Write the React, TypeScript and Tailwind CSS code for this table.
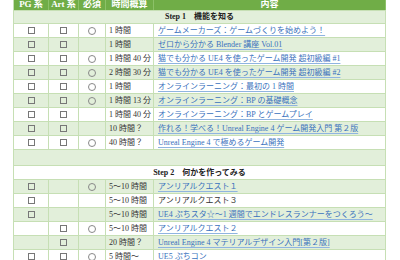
import React from "react";

type Row = {
  pg: boolean;
  art: boolean;
  req: boolean;
  time: string;
  text: string;
  link: boolean;
  green: boolean;
};

const step1: Row[] = [
  { pg: true, art: true, req: true, time: "1 時間", text: "ゲームメーカーズ：ゲームづくりを始めよう！", link: true, green: false },
  { pg: true, art: true, req: false, time: "1 時間", text: "ゼロから分かる Blender 講座 Vol.01", link: true, green: true },
  { pg: true, art: true, req: true, time: "1 時間 40 分", text: "猫でも分かる UE4 を使ったゲーム開発 超初級編 #1", link: true, green: false },
  { pg: true, art: true, req: true, time: "2 時間 30 分", text: "猫でも分かる UE4 を使ったゲーム開発 超初級編 #2", link: true, green: true },
  { pg: true, art: true, req: true, time: "1 時間", text: "オンラインラーニング：最初の 1 時間", link: true, green: false },
  { pg: true, art: true, req: true, time: "1 時間 13 分", text: "オンラインラーニング：BP の基礎概念", link: true, green: true },
  { pg: true, art: true, req: false, time: "1 時間 40 分", text: "オンラインラーニング：BP とゲームプレイ", link: true, green: false },
  { pg: true, art: true, req: false, time: "10 時間？", text: "作れる！学べる！Unreal Engine 4 ゲーム開発入門 第２版", link: true, green: true },
  { pg: true, art: true, req: true, time: "40 時間？", text: "Unreal Engine 4 で極めるゲーム開発", link: true, green: false },
];

const step2: Row[] = [
  { pg: true, art: false, req: true, time: "5～10 時間", text: "アンリアルクエスト１", link: true, green: true },
  { pg: true, art: false, req: false, time: "5～10 時間", text: "アンリアルクエスト３", link: false, green: false },
  { pg: true, art: false, req: false, time: "5～10 時間", text: "UE4 ぷちスタ☆～1 週間でエンドレスランナーをつくろう～", link: true, green: true },
  { pg: false, art: true, req: true, time: "5～10 時間", text: "アンリアルクエスト２", link: true, green: false },
  { pg: false, art: true, req: false, time: "20 時間？", text: "Unreal Engine 4 マテリアルデザイン入門[第２版]", link: true, green: true },
  { pg: true, art: true, req: true, time: "5 時間～", text: "UE5 ぷちコン", link: true, green: false },
];

const Box = () => <span className="block w-[7px] h-[7px] border border-[#777]" />;
const Circle = () => <span className="block w-[8px] h-[8px] rounded-full border border-[#888]" />;

function DataRow({ r }: { r: Row }) {
  return (
    <div
      className={`flex h-[14px] border-b border-[#c6dfb4] ${r.green ? "bg-[#e2efda]" : "bg-white"}`}
    >
      <div className="w-[35px] flex items-center justify-center border-r border-[#c6dfb4]">{r.pg && <Box />}</div>
      <div className="w-[30px] flex items-center justify-center border-r border-[#c6dfb4]">{r.art && <Box />}</div>
      <div className="w-[27px] flex items-center justify-center border-r border-[#c6dfb4]">{r.req && <Circle />}</div>
      <div className="w-[48px] flex items-center pl-[3px] border-r border-[#c6dfb4] text-[#333] whitespace-nowrap">{r.time}</div>
      <div className="flex-1 flex items-center pl-[4px] border-r border-[#c6dfb4] whitespace-nowrap overflow-hidden">
        {r.link ? (
          <span className="text-[#3a72bd] underline decoration-[#8fb4e0] underline-offset-[2px]">{r.text}</span>
        ) : (
          <span className="text-[#333]">{r.text}</span>
        )}
      </div>
    </div>
  );
}

export default function App() {
  return (
    <div
      className="w-[400px] h-[260px] overflow-hidden bg-white text-[8px] leading-[14px]"
      style={{ fontFamily: '"Liberation Serif", "Noto Sans CJK JP", serif' }}
    >
      <div className="ml-[13px] w-[373px] -mt-[3px] border-l border-[#c6dfb4]">
        <div className="flex h-[14px] bg-[#70ad47] text-white text-[9px] font-semibold border-b border-[#c6dfb4]">
          <div className="w-[35px] flex items-center justify-center border-r border-[#8cc168] whitespace-nowrap">PG 系</div>
          <div className="w-[30px] flex items-center justify-center border-r border-[#8cc168] whitespace-nowrap">Art 系</div>
          <div className="w-[27px] flex items-center justify-center border-r border-[#8cc168]">必須</div>
          <div className="w-[48px] flex items-center justify-center border-r border-[#8cc168]">時間概算</div>
          <div className="flex-1 flex items-center justify-center border-r border-[#8cc168]">内容</div>
        </div>
        <div className="h-[13px] flex items-center justify-center bg-[#e2efda] border-b border-r border-[#c6dfb4] font-bold text-[#222]">
          Step 1　機能を知る
        </div>
        {step1.map((r, i) => (
          <DataRow key={i} r={r} />
        ))}
        <div className="h-[16px] bg-[#e2efda] border-b border-r border-[#c6dfb4]" />
        <div className="h-[14px] flex items-center justify-center bg-white border-b border-r border-[#c6dfb4] font-bold text-[#222]">
          Step 2　何かを作ってみる
        </div>
        {step2.map((r, i) => (
          <DataRow key={i} r={r} />
        ))}
      </div>
    </div>
  );
}
